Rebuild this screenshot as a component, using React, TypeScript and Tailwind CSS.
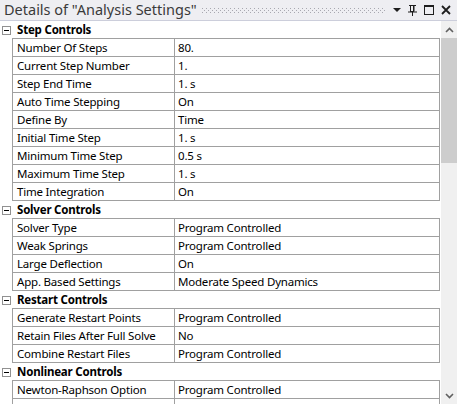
import React from 'react';

type Row = { label: string; value?: string; header?: boolean };

const rows: Row[] = [
  { label: 'Step Controls', header: true },
  { label: 'Number Of Steps', value: '80.' },
  { label: 'Current Step Number', value: '1.' },
  { label: 'Step End Time', value: '1. s' },
  { label: 'Auto Time Stepping', value: 'On' },
  { label: 'Define By', value: 'Time' },
  { label: 'Initial Time Step', value: '1. s' },
  { label: 'Minimum Time Step', value: '0.5 s' },
  { label: 'Maximum Time Step', value: '1. s' },
  { label: 'Time Integration', value: 'On' },
  { label: 'Solver Controls', header: true },
  { label: 'Solver Type', value: 'Program Controlled' },
  { label: 'Weak Springs', value: 'Program Controlled' },
  { label: 'Large Deflection', value: 'On' },
  { label: 'App. Based Settings', value: 'Moderate Speed Dynamics' },
  { label: 'Restart Controls', header: true },
  { label: 'Generate Restart Points', value: 'Program Controlled' },
  { label: 'Retain Files After Full Solve', value: 'No' },
  { label: 'Combine Restart Files', value: 'Program Controlled' },
  { label: 'Nonlinear Controls', header: true },
  { label: 'Newton-Raphson Option', value: 'Program Controlled' },
  { label: '', value: '' },
];

const MinusBox = () => (
  <div className="w-[9px] h-[9px] border border-[#919191] bg-white flex items-center justify-center">
    <div className="w-[5px] h-px bg-black" />
  </div>
);

const TitleIcons = () => (
  <div className="flex items-center gap-[5px] pr-[5px]">
    <svg width="10" height="10" viewBox="0 0 10 10">
      <path d="M1 3 H9 L5 7 Z" fill="#1e1e1e" />
    </svg>
    <svg width="11" height="12" viewBox="0 0 11 12">
      <path d="M2 1.5 H9" stroke="#1e1e1e" strokeWidth="1" />
      <rect x="3.5" y="1.5" width="3" height="6" fill="none" stroke="#1e1e1e" strokeWidth="1" />
      <rect x="6" y="1.5" width="1.5" height="6" fill="#1e1e1e" />
      <path d="M1 8 H10" stroke="#1e1e1e" strokeWidth="1" />
      <path d="M5.5 8 V12" stroke="#1e1e1e" strokeWidth="1" />
    </svg>
    <svg width="12" height="12" viewBox="0 0 12 12">
      <rect x="1.5" y="1.5" width="9" height="9" fill="none" stroke="#1e1e1e" strokeWidth="1" />
      <path d="M1 2 H11" stroke="#1e1e1e" strokeWidth="2" />
    </svg>
    <svg width="12" height="12" viewBox="0 0 12 12">
      <path d="M2 2 L10 10 M10 2 L2 10" stroke="#1e1e1e" strokeWidth="1.8" />
    </svg>
  </div>
);

const Grip = () => (
  <svg className="flex-1 h-[5px] ml-[5px] mr-[6px]">
    <defs>
      <pattern id="dots" width="4" height="4" patternUnits="userSpaceOnUse">
        <rect x="0" y="0" width="1" height="1" fill="#a8a8b0" />
        <rect x="2" y="2" width="1" height="1" fill="#a8a8b0" />
      </pattern>
    </defs>
    <rect width="100%" height="5" fill="url(#dots)" />
  </svg>
);

const ScrollBar = () => (
  <div className="w-[16px] ml-px bg-[#f0f0f0] flex flex-col items-center">
    <div className="h-[17px] flex items-center justify-center">
      <svg width="9" height="6" viewBox="0 0 9 6">
        <path d="M1 5 L4.5 1.5 L8 5" fill="none" stroke="#606060" strokeWidth="1.6" />
      </svg>
    </div>
    <div className="w-full h-[125px] bg-[#cdcdcd]" />
    <div className="flex-1" />
    <div className="h-[17px] flex items-center justify-center">
      <svg width="9" height="6" viewBox="0 0 9 6">
        <path d="M1 1 L4.5 4.5 L8 1" fill="none" stroke="#606060" strokeWidth="1.6" />
      </svg>
    </div>
  </div>
);

export default function App() {
  return (
    <div
      className="w-[457px] h-[404px] overflow-hidden bg-white text-black flex flex-col"
      style={{ fontFamily: '"Noto Sans", "Open Sans", sans-serif' }}
    >
      <div className="h-[21px] shrink-0 flex items-center bg-[#eeeef2] border-b border-[#cccedb]">
        <span className="pl-[4px] text-[14.5px] text-[#3a3a3a] whitespace-nowrap">
          Details of "Analysis Settings"
        </span>
        <Grip />
        <TitleIcons />
      </div>
      <div className="flex flex-1 min-h-0">
        <div className="w-[440px] overflow-hidden">
          {rows.map((r, i) =>
            r.header ? (
              <div key={i} className="flex h-[18px]">
                <div className="w-[12px] flex items-center pl-[2px]">
                  <MinusBox />
                </div>
                <div className="w-[428px] border-b border-[#a0a0a0] flex items-center pl-[5px] text-[11.5px] tracking-[-0.2px] font-bold">
                  {r.label}
                </div>
              </div>
            ) : (
              <div key={i} className="flex h-[18px]">
                <div className="w-[12px]" />
                <div className="w-[428px] flex border-l border-r border-b border-[#a0a0a0] text-[11.5px] tracking-[-0.2px]">
                  <div className="w-[162px] border-r border-[#a0a0a0] flex items-center pl-[4px] whitespace-nowrap">
                    {r.label}
                  </div>
                  <div className="flex-1 flex items-center pl-[3px] whitespace-nowrap">{r.value}</div>
                </div>
              </div>
            )
          )}
        </div>
        <ScrollBar />
      </div>
    </div>
  );
}
